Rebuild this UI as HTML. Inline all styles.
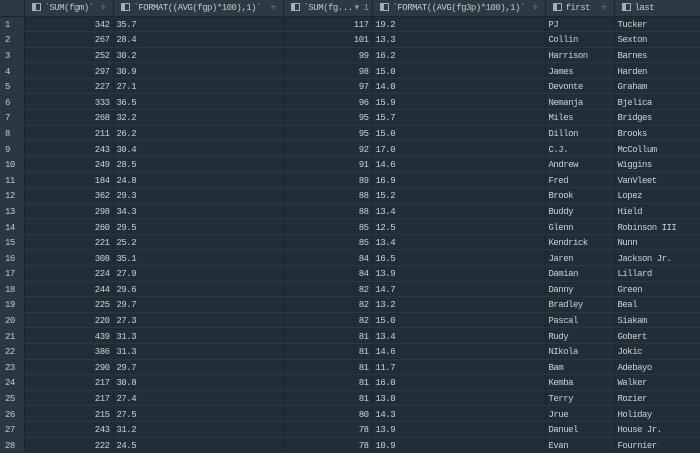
<!DOCTYPE html>
<html><head><meta charset="utf-8"><style>
body{margin:0;width:700px;height:451px;overflow:hidden;background:#212e37;font-family:"Liberation Mono",monospace;font-size:9px;letter-spacing:-0.5px;color:#ccd1d5}
table{border-collapse:collapse;table-layout:fixed;width:700px}
td,th{height:15.6px;padding:2px 3px 0 3px;border-right:1px solid #1a252c;border-bottom:1px solid #2a3841;white-space:nowrap;overflow:hidden;box-sizing:border-box}
th{height:16px;background:#2c3a43;font-weight:normal;text-align:left;color:#c4c9cd;border-bottom:1px solid #1a252c;padding:1px 3px 0 7px}
td.n{background:#2a3841;color:#c4c9cd;padding-left:5px}
td.r{text-align:right}
.ic{display:inline-block;width:9px;height:8px;border:1px solid #aab;margin-right:4px;vertical-align:-1px;background:linear-gradient(90deg,#aab 3px,transparent 3px);box-sizing:border-box}
.s{float:right;color:#99a;margin-right:4px}
</style></head><body>
<table>
<colgroup><col style="width:24px"><col style="width:89px"><col style="width:170px"><col style="width:89px"><col style="width:173px"><col style="width:69px"><col style="width:86px"></colgroup>
<tr><th></th><th><span class="ic"></span>`SUM(fgm)` <span class="s">÷</span></th><th><span class="ic"></span>`FORMAT((AVG(fgp)*100),1)` <span class="s">÷</span></th><th><span class="ic"></span>`SUM(fg... <span class="s" style="margin-right:0">▾ 1</span></th><th><span class="ic"></span>`FORMAT((AVG(fg3p)*100),1)` <span class="s">÷</span></th><th><span class="ic"></span>first <span class="s">÷</span></th><th><span class="ic"></span>last</th></tr>
<tr><td class="n">1</td><td class="r">342</td><td>35.7</td><td class="r">117</td><td>19.2</td><td>PJ</td><td>Tucker</td></tr>
<tr><td class="n">2</td><td class="r">267</td><td>28.4</td><td class="r">101</td><td>13.3</td><td>Collin</td><td>Sexton</td></tr>
<tr><td class="n">3</td><td class="r">252</td><td>30.2</td><td class="r">99</td><td>16.2</td><td>Harrison</td><td>Barnes</td></tr>
<tr><td class="n">4</td><td class="r">297</td><td>30.9</td><td class="r">98</td><td>15.0</td><td>James</td><td>Harden</td></tr>
<tr><td class="n">5</td><td class="r">227</td><td>27.1</td><td class="r">97</td><td>14.0</td><td>Devonte</td><td>Graham</td></tr>
<tr><td class="n">6</td><td class="r">333</td><td>36.5</td><td class="r">96</td><td>15.9</td><td>Nemanja</td><td>Bjelica</td></tr>
<tr><td class="n">7</td><td class="r">268</td><td>32.2</td><td class="r">95</td><td>15.7</td><td>Miles</td><td>Bridges</td></tr>
<tr><td class="n">8</td><td class="r">211</td><td>26.2</td><td class="r">95</td><td>15.0</td><td>Dillon</td><td>Brooks</td></tr>
<tr><td class="n">9</td><td class="r">243</td><td>30.4</td><td class="r">92</td><td>17.0</td><td>C.J.</td><td>McCollum</td></tr>
<tr><td class="n">10</td><td class="r">249</td><td>28.5</td><td class="r">91</td><td>14.6</td><td>Andrew</td><td>Wiggins</td></tr>
<tr><td class="n">11</td><td class="r">184</td><td>24.8</td><td class="r">89</td><td>16.9</td><td>Fred</td><td>VanVleet</td></tr>
<tr><td class="n">12</td><td class="r">362</td><td>29.3</td><td class="r">88</td><td>15.2</td><td>Brook</td><td>Lopez</td></tr>
<tr><td class="n">13</td><td class="r">298</td><td>34.3</td><td class="r">88</td><td>13.4</td><td>Buddy</td><td>Hield</td></tr>
<tr><td class="n">14</td><td class="r">260</td><td>29.5</td><td class="r">85</td><td>12.5</td><td>Glenn</td><td>Robinson III</td></tr>
<tr><td class="n">15</td><td class="r">221</td><td>25.2</td><td class="r">85</td><td>13.4</td><td>Kendrick</td><td>Nunn</td></tr>
<tr><td class="n">16</td><td class="r">308</td><td>35.1</td><td class="r">84</td><td>16.5</td><td>Jaren</td><td>Jackson Jr.</td></tr>
<tr><td class="n">17</td><td class="r">224</td><td>27.9</td><td class="r">84</td><td>13.9</td><td>Damian</td><td>Lillard</td></tr>
<tr><td class="n">18</td><td class="r">244</td><td>29.6</td><td class="r">82</td><td>14.7</td><td>Danny</td><td>Green</td></tr>
<tr><td class="n">19</td><td class="r">225</td><td>29.7</td><td class="r">82</td><td>13.2</td><td>Bradley</td><td>Beal</td></tr>
<tr><td class="n">20</td><td class="r">220</td><td>27.3</td><td class="r">82</td><td>15.0</td><td>Pascal</td><td>Siakam</td></tr>
<tr><td class="n">21</td><td class="r">439</td><td>31.3</td><td class="r">81</td><td>13.4</td><td>Rudy</td><td>Gobert</td></tr>
<tr><td class="n">22</td><td class="r">386</td><td>31.3</td><td class="r">81</td><td>14.6</td><td>NIkola</td><td>Jokic</td></tr>
<tr><td class="n">23</td><td class="r">290</td><td>29.7</td><td class="r">81</td><td>11.7</td><td>Bam</td><td>Adebayo</td></tr>
<tr><td class="n">24</td><td class="r">217</td><td>30.8</td><td class="r">81</td><td>16.0</td><td>Kemba</td><td>Walker</td></tr>
<tr><td class="n">25</td><td class="r">217</td><td>27.4</td><td class="r">81</td><td>13.0</td><td>Terry</td><td>Rozier</td></tr>
<tr><td class="n">26</td><td class="r">215</td><td>27.5</td><td class="r">80</td><td>14.3</td><td>Jrue</td><td>Holiday</td></tr>
<tr><td class="n">27</td><td class="r">243</td><td>31.2</td><td class="r">78</td><td>13.9</td><td>Danuel</td><td>House Jr.</td></tr>
<tr><td class="n">28</td><td class="r">222</td><td>24.5</td><td class="r">78</td><td>10.9</td><td>Evan</td><td>Fournier</td></tr>
</table>
</body></html>
